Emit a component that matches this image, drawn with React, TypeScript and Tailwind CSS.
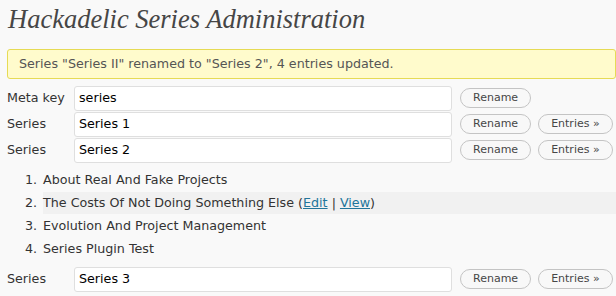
import React from "react";

const font = { fontFamily: '"DejaVu Sans", Verdana, sans-serif' };

function Btn({ children }: { children: React.ReactNode }) {
  return (
    <button className="h-[20px] rounded-full border border-[#c4c4c4] bg-[#f8f8f8] px-[12px] text-[11px] leading-[18px] text-[#464646]">
      {children}
    </button>
  );
}

function Row({ label, value, entries }: { label: string; value: string; entries?: boolean }) {
  return (
    <div className="flex h-[26px] items-center">
      <div className="w-[74px] shrink-0 pl-[7px] text-[12.7px] text-[#333333]">{label}</div>
      <div className="flex h-[25px] w-[378px] shrink-0 items-center rounded-[3px] border border-[#dfdfdf] bg-white pl-[4px] text-[12.7px] text-black">
        {value}
      </div>
      <div className="ml-[8px] flex gap-[7px]">
        <Btn>Rename</Btn>
        {entries && <Btn>Entries »</Btn>}
      </div>
    </div>
  );
}

export default function App() {
  const items = [
    "About Real And Fake Projects",
    "The Costs Of Not Doing Something Else",
    "Evolution And Project Management",
    "Series Plugin Test",
  ];
  return (
    <div className="h-[296px] w-[616px] overflow-hidden bg-[#f9f9f9] text-[#333333]" style={font}>
      <h2
        className="pl-[8px] pt-[3px] text-[26.5px] italic leading-[32px] text-[#464646]"
        style={{ fontFamily: '"Liberation Serif", Georgia, serif' }}
      >
        Hackadelic Series Administration
      </h2>
      <div className="ml-[7px] mt-[14px] flex h-[30px] items-center rounded-[3px] border border-[#e6db55] bg-[#fffbcc] pl-[11px] text-[12.7px] text-[#555555]">
        Series "Series II" renamed to "Series 2", 4 entries updated.
      </div>
      <div className="mt-[6px]">
        <Row label="Meta key" value="series" />
        <Row label="Series" value="Series 1" entries />
        <Row label="Series" value="Series 2" entries />
      </div>
      <ol className="mt-[5px] text-[12.7px]">
        {items.map((t, i) => (
          <li key={i} className="flex h-[23px] items-center">
            <span className="w-[43px] pr-[6px] text-right">{i + 1}.</span>
            <span className={`flex h-[22px] flex-1 items-center ${i === 1 ? "bg-[#f1f1f1]" : ""}`}>
              {t}
              {i === 1 && (
                <>
                  &nbsp;(<a className="text-[#21759b] underline">Edit</a>&nbsp;|&nbsp;
                  <a className="text-[#21759b] underline">View</a>)
                </>
              )}
            </span>
          </li>
        ))}
      </ol>
      <div className="mt-[6px]">
        <Row label="Series" value="Series 3" entries />
      </div>
    </div>
  );
}
